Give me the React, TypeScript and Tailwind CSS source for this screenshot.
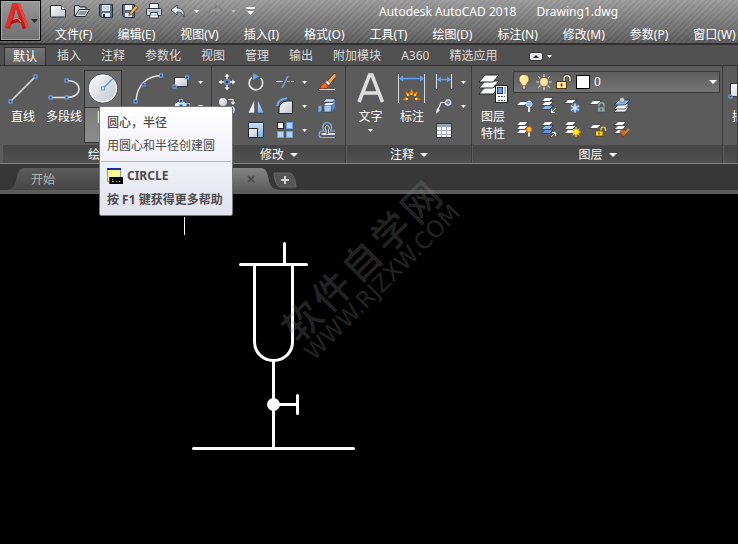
import type { ReactNode } from "react";

const menus = [
  "文件(F)",
  "编辑(E)",
  "视图(V)",
  "插入(I)",
  "格式(O)",
  "工具(T)",
  "绘图(D)",
  "标注(N)",
  "修改(M)",
  "参数(P)",
  "窗口(W)",
];

const ribbonTabs = [
  "插入",
  "注释",
  "参数化",
  "视图",
  "管理",
  "输出",
  "附加模块",
  "A360",
  "精选应用",
];

function Caret({ className = "" }: { className?: string }) {
  return (
    <svg width="5" height="3" viewBox="0 0 5 3" className={`shrink-0 ${className}`}>
      <path d="M0 0h5L2.5 3z" fill="currentColor" />
    </svg>
  );
}

function Grip({ x, y }: { x: number; y: number }) {
  return (
    <rect x={x - 1.5} y={y - 1.5} width="3" height="3" fill="#34445f" stroke="#7ab0ff" strokeWidth="1" />
  );
}

function Defs() {
  return (
    <svg width="0" height="0" className="absolute" aria-hidden="true">
      <defs>
        <linearGradient id="steel" x1="0" y1="0" x2="1" y2="1">
          <stop offset="0" stopColor="#fdfdff" />
          <stop offset="1" stopColor="#bfc3cd" />
        </linearGradient>
        <linearGradient id="blue" x1="0" y1="0" x2="0" y2="1">
          <stop offset="0" stopColor="#cfe2fb" />
          <stop offset="1" stopColor="#7ba9e6" />
        </linearGradient>
        <linearGradient id="red" x1="0" y1="0" x2="1" y2="1">
          <stop offset="0" stopColor="#e63a37" />
          <stop offset="1" stopColor="#a91417" />
        </linearGradient>
        <linearGradient id="tabDim" x1="0" y1="0" x2="0" y2="1">
          <stop offset="0" stopColor="#5b5b5b" />
          <stop offset="1" stopColor="#464646" />
        </linearGradient>
        <linearGradient id="tabLit" x1="0" y1="0" x2="0" y2="1">
          <stop offset="0" stopColor="#858585" />
          <stop offset="1" stopColor="#5e5e5e" />
        </linearGradient>
      </defs>
    </svg>
  );
}

/* quick access toolbar */

function QuickButton({ label, children }: { label: string; children: ReactNode }) {
  return (
    <button type="button" aria-label={label} className="flex h-4 w-4 items-center justify-center">
      <svg width="16" height="16" viewBox="0 0 16 16">
        {children}
      </svg>
    </button>
  );
}

function QuickAccess() {
  return (
    <div className="flex items-center gap-2 pl-[9px]">
      <QuickButton label="新建">
        <path d="M.5 2.5h11l4 4v7.5H.5z" fill="url(#steel)" stroke="#2d2f33" />
        <path d="M11.5 2.5v4h4" fill="#fff" stroke="#555b66" />
      </QuickButton>
      <QuickButton label="打开">
        <path d="M.5 13V2.5h4.500l1 1.500h6v3" fill="#d9dfe5" stroke="#25282c" />
        <path d="M1 13.500L5 6.500h10.500L11.500 13.500z" fill="#e3e8ee" stroke="#25282c" />
        <path d="M3.500 12l2.500-4h7.500l-2.500 4z" fill="#8c949d" />
      </QuickButton>
      <QuickButton label="保存">
        <path d="M1.500 1.500h13v13h-11l-2-2z" fill="#5a6f8c" stroke="#242d3a" />
        <rect x="4" y="2" width="8" height="6" fill="#f2f4f7" />
        <path d="M5 4h6M5 6h6" stroke="#a5adb8" />
        <rect x="4" y="10" width="8" height="4" fill="#e3e6ea" />
        <rect x="5" y="11" width="2" height="3" fill="#2b3542" />
      </QuickButton>
      <QuickButton label="另存为">
        <path d="M.5 1.500h12v13h-10l-2-2z" fill="#5a6f8c" stroke="#242d3a" />
        <rect x="3" y="2" width="7" height="5" fill="#f2f4f7" />
        <rect x="3" y="10" width="7" height="4" fill="#e3e6ea" />
        <path d="M7 12.500l1-3.500 5.500-6.500 2.500 2-6 6.500z" fill="#f4b73d" stroke="#33280f" strokeWidth=".7" />
        <path d="M13.500 2.500l1-1 1.500 1.500v1.500z" fill="#e8743b" />
      </QuickButton>
      <QuickButton label="打印">
        <path d="M3.500 6V.5h9V6" fill="#f6f7f9" stroke="#3b4048" />
        <rect x=".5" y="5.500" width="15" height="7" rx="1" fill="#d5dae0" stroke="#2b2f36" />
        <path d="M2 8h12" stroke="#89919c" />
        <path d="M4.500 9.500h7l1 5.500h-9z" fill="#fff" stroke="#3b4048" />
        <path d="M5 12h6" stroke="#7aa3d8" />
      </QuickButton>
      <QuickButton label="放弃">
        <path d="M7 2L1 7l6 5V9c3.500 0 5.500 1 7 5 .8-5-1.500-9-7-9z" fill="url(#steel)" stroke="#3c4450" strokeWidth=".9" />
      </QuickButton>
      <Caret className="text-white" />
      <QuickButton label="重做">
        <path d="M9 2l6 5-6 5V9c-3.500 0-5.500 1-7 5-.8-5 1.500-9 7-9z" fill="#979797" stroke="#747474" strokeWidth=".9" />
      </QuickButton>
      <Caret className="text-[#bdbdbd]" />
      <button type="button" aria-label="自定义快速访问工具栏" className="-ml-0.5 flex h-4 w-4 items-center justify-center">
        <svg width="9" height="8" viewBox="0 0 9 8">
          <path d="M1 4h7L4.500 8z" fill="#fff" />
          <rect width="9" height="2" fill="#fff" />
        </svg>
      </button>
    </div>
  );
}

function Header() {
  return (
    <header className="flex h-[45px] overflow-hidden border-b-2 border-[#303030] bg-[repeating-linear-gradient(135deg,#ffffff0a_0_2px,#0000000a_2px_4px),linear-gradient(#9c9c9c,#5c5c5c)]">
      <button
        type="button"
        aria-label="应用程序菜单"
        className="flex h-[41px] w-[41px] shrink-0 items-start gap-0.5 border border-black bg-linear-to-b from-[#989898] to-[#6f6f6f] pl-1 pt-0.5 shadow-[inset_0_0_0_1px_#a8a8a8]"
      >
        <svg width="24" height="27" viewBox="0 0 24 27">
          <path
            d="M0 25L7.500 0h7.500l8.500 24-5.500 2.500-2.500-6.500c-3-1-6-.5-9 1L5 26zM11 6l-2.500 9h5.500z"
            fill="url(#red)"
            fillRule="evenodd"
          />
          <path d="M0 25L7.500 0H10L5.500 22z" fill="#dc2f2e" />
          <path d="M12 0h3l8.500 24-2.500 1z" fill="#ea443f" />
          <path d="M5.500 20c3-4 6-5 9-5l2 4c-4-1-8 0-11 3z" fill="#9d1216" />
          <path d="M8 16.500c3-2 6-1.500 8 2.500" fill="none" stroke="#f28178" strokeWidth="1.200" />
        </svg>
        <svg width="7" height="5" viewBox="0 0 7 5" className="mt-4">
          <path d="M0 0h7L3.500 4z" fill="#25303c" />
        </svg>
      </button>
      <div className="min-w-0 flex-1">
        <div className="flex h-[22px] items-center">
          <QuickAccess />
          <h1 className="flex gap-5 whitespace-nowrap pl-[121px] pt-0.5 text-[12px] text-white">
            <span>Autodesk AutoCAD 2018</span>
            <span>Drawing1.dwg</span>
          </h1>
        </div>
        <nav className="flex h-6 items-center gap-[25px] whitespace-nowrap pl-[14px] pt-0.5 text-[12px] text-white">
          {menus.map((m) => (
            <button key={m} type="button">
              {m}
            </button>
          ))}
        </nav>
      </div>
    </header>
  );
}

function RibbonTabs() {
  return (
    <nav className="flex h-[21px] items-end gap-5 whitespace-nowrap border-b border-[#2f2f2f] bg-[#515151] pl-1 text-[12px] text-[#dcdcdc]">
      <button
        type="button"
        className="-mr-[9px] h-[18px] border border-b-0 border-[#2f2f2f] bg-linear-to-b from-[#757575] to-[#5d5d5d] px-2 leading-[18px] text-white"
      >
        默认
      </button>
      {ribbonTabs.map((t) => (
        <button key={t} type="button" className="h-[18px] leading-[18px]">
          {t}
        </button>
      ))}
      <button type="button" aria-label="最小化功能区" className="ml-3 flex h-[18px] items-center gap-1">
        <svg width="14" height="9" viewBox="0 0 14 9">
          <rect x=".5" y=".5" width="13" height="8" rx="2" fill="#e9e9ee" stroke="#2e2e33" />
          <path d="M4 6h6L7 3z" fill="#222" />
        </svg>
        <Caret className="text-white" />
      </button>
    </nav>
  );
}

/* ribbon building blocks */

function Panel({
  title,
  className,
  children,
}: {
  title: string;
  className: string;
  children: ReactNode;
}) {
  return (
    <section className={`flex min-w-0 flex-col overflow-hidden border-r border-[#3b3b3b] ${className}`}>
      <div className="flex h-[79px] pt-1">{children}</div>
      <footer className="ml-px flex h-[18px] items-center justify-center gap-1.5 whitespace-nowrap bg-linear-to-b from-[#464646] to-[#505050] pt-px text-[12px] text-white">
        {title && (
          <>
            <span>{title}</span>
            <svg width="8" height="4" viewBox="0 0 8 4">
              <path d="M0 0h8L4 4z" fill="#fff" />
            </svg>
          </>
        )}
      </footer>
    </section>
  );
}

function BigButton({
  label,
  className = "",
  children,
}: {
  label: ReactNode;
  className?: string;
  children: ReactNode;
}) {
  return (
    <button
      type="button"
      className={`flex h-[73px] shrink-0 flex-col items-center whitespace-nowrap text-[12px] leading-[17px] text-white ${className}`}
    >
      <svg width="36" height="36" viewBox="0 0 36 36" className="mb-0.5 shrink-0">
        {children}
      </svg>
      {label}
    </button>
  );
}

function SmallButton({
  label,
  caret = false,
  children,
}: {
  label: string;
  caret?: boolean;
  children: ReactNode;
}) {
  return (
    <button type="button" aria-label={label} className="flex h-6 items-center justify-center gap-2 text-white">
      <svg width="18" height="18" viewBox="0 0 18 18" className="shrink-0">
        {children}
      </svg>
      {caret && <Caret />}
    </button>
  );
}

function DrawPanel() {
  return (
    <Panel title="绘图" className="w-[212px] pl-0.5">
      <BigButton label="直线" className="w-[42px]">
        <path d="M6 31L31 6" stroke="#e6e6e6" strokeWidth="1.500" />
        <Grip x={5.5} y={31.5} />
        <Grip x={30.5} y={6.5} />
      </BigButton>
      <BigButton label="多段线" className="w-[40px]">
        <path d="M5 27.500h16c8 0 12-4 12-8.500S29 10.500 21 10.500" fill="none" stroke="#e6e6e6" strokeWidth="1.500" />
        <Grip x={4.5} y={27.5} />
        <Grip x={20.5} y={27.5} />
        <Grip x={20.5} y={10.5} />
      </BigButton>
      <BigButton
        label="圆"
        className="w-[38px] border border-[#333] bg-[linear-gradient(#6b6b6b_0_36px,#333_36px_37px,#7c7c7c_37px,#8c8c8c)]"
      >
        <circle cx="18" cy="17.500" r="14.500" fill="url(#steel)" stroke="#383d47" strokeWidth="1" />
        <circle cx="18" cy="17.500" r="13.500" fill="none" stroke="#fff" strokeWidth="1.200" />
        <path d="M18 17.500L28 7.500" stroke="#5c93dc" strokeWidth="1.500" />
        <rect x="16.500" y="16" width="3" height="3" fill="#fff" stroke="#5c93dc" />
      </BigButton>
      <BigButton label="圆弧" className="w-[46px]">
        <path d="M9 31C10 15 20 5.500 35 5.500" fill="none" stroke="#e6e6e6" strokeWidth="1.500" />
        <Grip x={8.5} y={31.5} />
        <Grip x={16.5} y={14.5} />
        <Grip x={34} y={5.5} />
      </BigButton>
      <div className="ml-1 flex flex-col">
        <SmallButton label="矩形" caret>
          <rect x="2.500" y="4.500" width="13" height="9" fill="url(#steel)" stroke="#34373d" />
          <Grip x={2.5} y={13.5} />
          <Grip x={15} y={4.5} />
        </SmallButton>
        <SmallButton label="椭圆" caret>
          <ellipse cx="9" cy="9" rx="7" ry="5" fill="url(#steel)" stroke="#34373d" />
          <Grip x={9} y={4} />
          <Grip x={16} y={8} />
          <Grip x={9} y={9} />
        </SmallButton>
        <SmallButton label="图案填充" caret>
          <rect x="2" y="3" width="13" height="12" fill="#9db8dd" stroke="#34373d" />
          <path d="M2 9l6-6M2 15L14 3M8 15l7-7" stroke="#fff" />
        </SmallButton>
      </div>
    </Panel>
  );
}

function ModifyPanel() {
  return (
    <Panel title="修改" className="w-[134px]">
      <div className="grid grid-cols-[29px_29px_43px_28px] content-start">
        <SmallButton label="移动">
          <path d="M9 0l3 4H6zM9 18l3-4H6zM0 9l4-3v6zM18 9l-4-3v6z" fill="#f2f2f5" stroke="#33363b" strokeWidth=".5" />
          <path d="M9 3v3M9 12v3M3 9h3M12 9h3" stroke="#f2f2f5" strokeWidth="1.500" />
          <rect x="7" y="7" width="4" height="4" fill="#2c3b54" stroke="#7ab0ff" />
        </SmallButton>
        <SmallButton label="旋转">
          <path d="M5 4.500A6.800 6.800 0 1 0 13.500 5" fill="none" stroke="#e3e3e3" strokeWidth="1.600" />
          <path d="M6 0l6 3.500-6 3.500z" fill="#68a3f2" />
        </SmallButton>
        <SmallButton label="修剪" caret>
          <path d="M0 8.500h7" stroke="#e6e6e6" />
          <path d="M11 8.500h7" stroke="#78aef7" strokeDasharray="3 1" />
          <path d="M12 3L6 15" stroke="#78aef7" strokeWidth="1.300" />
        </SmallButton>
        <SmallButton label="删除">
          <path d="M18 0v3.500L12 11 9 8.500 15.500 1z" fill="#f0a95f" stroke="#4a2b10" strokeWidth=".7" />
          <path d="M9 7.500l3.500 3-2 2-3.500-3z" fill="#f3f3f3" stroke="#333" strokeWidth=".5" />
          <path d="M6.500 9.500l4 3.500c-2 3-4 3-8.500 2.500 1-3 2-5 4.500-6z" fill="#f0642c" stroke="#7c1d08" strokeWidth=".6" />
          <path d="M1 16.500h16" stroke="#dedede" />
        </SmallButton>
        <SmallButton label="复制">
          <circle cx="5" cy="5" r="4" fill="url(#steel)" />
          <circle cx="13" cy="13" r="4" fill="url(#blue)" />
          <path d="M10 2.500h5V7M13 5l2 2 2-2" fill="none" stroke="#eee" strokeWidth="1.200" />
        </SmallButton>
        <SmallButton label="镜像">
          <path d="M7.500 2V16H1z" fill="#eceef2" stroke="#3b3f46" strokeWidth=".5" />
          <path d="M10.500 2V16H17z" fill="url(#blue)" stroke="#3b3f46" strokeWidth=".5" />
        </SmallButton>
        <SmallButton label="圆角" caret>
          <path d="M3 16.500V12c0-5 4-8 9-8h4.500v12.500z" fill="url(#steel)" stroke="#24272c" />
          <path d="M1 9C2 4 5 1.500 11 1.500" fill="none" stroke="#6ea5f3" strokeWidth="2" />
        </SmallButton>
        <SmallButton label="分解">
          <path d="M5 5l3-3h9l-2 3z" fill="#dbe8f9" stroke="#35486a" strokeWidth=".6" />
          <path d="M15 5l2-3v4l-2 3z" fill="#5b8bcf" />
          <path d="M6 8h8l-1 7H6z" fill="#a9c6ec" stroke="#35486a" strokeWidth=".7" />
          <path d="M6 8l2-2h8l-2 2z" fill="#eaf2fd" />
          <path d="M14 8l3-2v5l-3 3z" fill="#5b8bcf" />
          <path d="M0 9l4-1v6l-4 2z" fill="#7fabe6" stroke="#35486a" strokeWidth=".6" />
        </SmallButton>
        <SmallButton label="拉伸">
          <path d="M3 15V5h5l7 10z" fill="url(#blue)" stroke="#1d2b45" />
        </SmallButton>
        <SmallButton label="缩放">
          <rect x="1.500" y="1.500" width="15" height="15" fill="url(#blue)" stroke="#24344f" />
          <rect x="1.500" y="7.500" width="9" height="9" fill="url(#steel)" stroke="#222" />
        </SmallButton>
        <SmallButton label="阵列" caret>
          <rect x="1.500" y="1.500" width="6" height="6" fill="#f5f5f7" stroke="#222" />
          <rect x="10.500" y="1.500" width="6" height="6" fill="#b5d2f8" stroke="#6a9fe8" />
          <rect x="1.500" y="10.500" width="6" height="6" fill="#b5d2f8" stroke="#6a9fe8" />
          <rect x="10.500" y="10.500" width="6" height="6" fill="#b5d2f8" stroke="#6a9fe8" />
        </SmallButton>
        <SmallButton label="偏移">
          <path d="M17 16.500H3.500C.5 16.500 0 10.500 4 10h2C3.500 6 5 1.500 9 1.500s6 4.500 3.500 8.500H17" fill="none" stroke="#86b5f6" strokeWidth="1.200" />
          <path d="M17 13.500H4.500c-1.500 0-1.500-1 0-1H8V9C6.500 7 7 4.500 9 4.500s3 2.500 1.500 4.500v3.500H17" fill="none" stroke="#dfe5ee" />
        </SmallButton>
      </div>
    </Panel>
  );
}

function AnnotationPanel() {
  return (
    <Panel title="注释" className="w-[126px]">
      <BigButton
        className="ml-1 w-[41px]"
        label={
          <>
            <span>文字</span>
            <Caret className="mt-1" />
          </>
        }
      >
        <path d="M6 32L16.500 5h2.500l10.500 27M10 23h16" fill="none" stroke="#dedede" strokeWidth="3.600" />
      </BigButton>
      <BigButton label="标注" className="w-[42px]">
        <path d="M4.500 4v29M30.500 4v29" stroke="#d9d9d9" />
        <path d="M6 8.500h23" stroke="#5ea0fb" strokeWidth="1.500" />
        <path d="M5 8.500l4-3v6zM30 8.500l-4-3v6z" fill="#5ea0fb" />
        <g fill="#f08a12" stroke="#93400c" strokeWidth=".4">
          <path d="M17.500 18.500l2 4.500-2 3-2-3z" />
          <path d="M11 21l4 2 .5 3.500-3-1z" />
          <path d="M24 21l-4 2-.5 3.500 3-1z" />
          <path d="M8 29.500l4-2.500 3 2-3 1.500z" />
          <path d="M27 29.500l-4-2.500-3 2 3 1.500z" />
        </g>
        <g fill="#ffee58">
          <circle cx="17.500" cy="24" r="1.100" />
          <circle cx="13.800" cy="25" r="1" />
          <circle cx="21.200" cy="25" r="1" />
          <circle cx="13" cy="29" r="1" />
          <circle cx="22" cy="29" r="1" />
        </g>
      </BigButton>
      <div className="ml-0.5 flex flex-col items-start">
        <SmallButton label="线性" caret>
          <path d="M1.500 1v15M16.500 1v15" stroke="#e0e0e0" />
          <path d="M4 6.500h10" stroke="#5ea0fb" strokeWidth="1.500" />
          <path d="M2 6.500l4-3v6zM16 6.500l-4-3v6z" fill="#5ea0fb" />
        </SmallButton>
        <SmallButton label="引线" caret>
          <path d="M2 15L6 5.500h6" fill="none" stroke="#e8e8e8" strokeWidth="1.200" />
          <path d="M1 17l1-6 3 2z" fill="#eee" />
          <circle cx="13" cy="5.500" r="2.700" fill="#7f8aa0" stroke="#eef1f6" strokeWidth="1.200" />
        </SmallButton>
        <SmallButton label="表格">
          <rect x="1.500" y="2.500" width="15" height="14" fill="#f4f4f6" stroke="#34373d" />
          <path d="M2 4.500h14" stroke="#9aa0ab" strokeWidth="3" />
          <path d="M2 9.500h14M2 13.500h14M6.500 6v10M11.500 6v10" stroke="#a6a9b0" />
        </SmallButton>
      </div>
    </Panel>
  );
}

function Sheet({ x, y, fill = "#fafafa" }: { x: number; y: number; fill?: string }) {
  return (
    <path
      d="M0 4.500L4 .5h8.500l-4 4z"
      transform={`translate(${x} ${y})`}
      fill={fill}
      stroke="#33363b"
      strokeWidth=".8"
    />
  );
}

function LayersPanel() {
  return (
    <Panel title="图层" className="w-[251px]">
      <BigButton
        className="ml-0.5 w-[38px]"
        label={
          <>
            <span>图层</span>
            <span>特性</span>
          </>
        }
      >
        <g fill="#fff" stroke="#24272c" strokeWidth="1">
          <path d="M4 24l6-7h14l-6 7z" />
          <path d="M4 18l6-7h14l-6 7z" />
          <path d="M4 12l6-7h14l-6 7z" />
        </g>
        <rect x="20.500" y="15.500" width="12" height="17" fill="#f5f6f8" stroke="#24272c" />
        <rect x="22.500" y="17.500" width="5" height="6" fill="#6f9ada" stroke="#1f3b6d" />
        <path d="M30 17v7" stroke="#a6a6a6" strokeWidth="1.500" />
        <path d="M23 26.500h7M23 30.500h7" stroke="#444" strokeDasharray="2 1" />
      </BigButton>
      <div className="flex min-w-0 flex-1 flex-col pl-px">
        <div className="mr-0.5 mt-px flex h-[22px] items-center gap-1 border border-[#383838] bg-linear-to-b from-[#5e5e5e] to-[#747474] pl-0.5">
          <svg width="16" height="18" viewBox="0 0 16 18">
            <path d="M8 1.500c3 0 5 2 5 4.500 0 3-2.500 4-3 7H6c-.5-3-3-4-3-7 0-2.500 2-4.500 5-4.500z" fill="#ffe69a" stroke="#5b4b25" strokeWidth=".7" />
            <path d="M5 5c0-1 1-2 2.500-2" stroke="#fff" fill="none" />
            <path d="M6.500 13h3v3h-3z" fill="#d9dce2" stroke="#333" strokeWidth=".6" />
          </svg>
          <svg width="16" height="16" viewBox="0 0 16 16">
            <g stroke="#dcdcdc" strokeWidth="1.100">
              <path d="M8 0v3M8 13v3M0 8h3M13 8h3M2.300 2.300l2 2M11.700 11.700l2 2M13.700 2.300l-2 2M4.300 11.700l-2 2" />
            </g>
            <circle cx="8" cy="8" r="4" fill="#ffe7a0" stroke="#c8b06a" strokeWidth=".6" />
          </svg>
          <svg width="16" height="16" viewBox="0 0 16 16">
            <path d="M8 8V4c0-3 6-3 6 0v3" fill="none" stroke="#2c2c2c" strokeWidth="3" />
            <path d="M8 8V4c0-3 6-3 6 0v3" fill="none" stroke="#ece3c2" strokeWidth="1.500" />
            <rect x=".5" y="7.500" width="10" height="7" fill="#ffe69a" stroke="#4b3d18" />
            <path d="M5.500 9.500v3" stroke="#3b2e10" strokeWidth="1.500" />
          </svg>
          <span className="h-[14px] w-[14px] shrink-0 border border-black bg-white" />
          <div className="flex min-w-0 flex-1 items-center pr-0.5">
            <select aria-label="图层" className="min-w-0 flex-1 appearance-none bg-transparent text-[12px] leading-4 text-white">
              <option>0</option>
            </select>
            <svg width="8" height="4" viewBox="0 0 8 4" className="pointer-events-none">
              <path d="M0 0h8L4 4z" fill="#fff" />
            </svg>
          </div>
        </div>
        <div className="grid w-[121px] grid-cols-5">
          <SmallButton label="关">
            <Sheet x={0} y={5} />
            <circle cx="13" cy="8" r="3" fill="#8fbdf5" stroke="#e9f2ff" strokeWidth=".8" />
            <path d="M13 11v5" stroke="#e7e7e7" strokeWidth="2" />
          </SmallButton>
          <SmallButton label="隔离">
            <Sheet x={1} y={9} fill="#8ab4ee" />
            <Sheet x={1} y={5} />
            <Sheet x={1} y={1} />
            <path d="M16 12l-4 4M11.500 13v3.500H15" fill="none" stroke="#eee" />
          </SmallButton>
          <SmallButton label="冻结">
            <Sheet x={0} y={3} />
            <circle cx="11" cy="12" r="4.500" fill="#4a7ac0" />
            <path d="M11 7.500v9M7 9.700l8 4.600M15 9.700l-8 4.600" stroke="#e7f1ff" strokeWidth="1.300" />
          </SmallButton>
          <SmallButton label="锁定">
            <Sheet x={0} y={4} />
            <path d="M10 11V9c0-3 5-3 5 0v2" fill="none" stroke="#8fa8a6" strokeWidth="1.400" />
            <rect x="8.500" y="11" width="7.500" height="5" fill="#8fa8a6" stroke="#475756" strokeWidth=".7" />
            <path d="M12 12.500v2" stroke="#2d3837" />
          </SmallButton>
          <SmallButton label="置为当前">
            <path d="M1 16l5-5h10l-4 5z" fill="#fafafa" stroke="#33363b" strokeWidth=".8" />
            <path d="M1 13l5-5h10l-4 5z" fill="#fafafa" stroke="#33363b" strokeWidth=".8" />
            <path d="M1 9l5-5h11l-5 5z" fill="#8ab4ee" stroke="#1f3357" strokeWidth=".8" />
            <circle cx="9" cy="4" r="2.500" fill="#c9ced6" stroke="#555" strokeWidth=".5" />
          </SmallButton>
          <SmallButton label="打开所有图层">
            <Sheet x={0} y={9} />
            <Sheet x={0} y={5} />
            <Sheet x={0} y={1} />
            <circle cx="13" cy="9.500" r="2.800" fill="#ffbf32" stroke="#e0650c" strokeWidth="1" />
            <path d="M13 12.500v4" stroke="#e7e7e7" strokeWidth="2" />
          </SmallButton>
          <SmallButton label="取消隔离">
            <Sheet x={1} y={9} fill="#5f93e0" />
            <Sheet x={1} y={5} fill="#8ab4ee" />
            <Sheet x={1} y={1} />
            <path d="M11 17l4-4M12 12.500h3.500V16" fill="none" stroke="#eee" />
          </SmallButton>
          <SmallButton label="解冻">
            <Sheet x={0} y={9} />
            <Sheet x={0} y={5} />
            <Sheet x={0} y={1} />
            <path d="M12 7v10M7 12h10M8.500 8.500l7 7M15.500 8.500l-7 7" stroke="#ffdd42" />
            <circle cx="12" cy="12" r="3" fill="#ffe22e" stroke="#f3b90e" strokeWidth=".7" />
          </SmallButton>
          <SmallButton label="解锁">
            <Sheet x={0} y={4} />
            <path d="M12 11V9c0-2.500 4.500-2.500 4.500 0v2" fill="none" stroke="#f1c324" strokeWidth="1.400" />
            <rect x="6.500" y="11" width="7.500" height="5" fill="#ffd028" stroke="#5b430b" strokeWidth=".7" />
            <path d="M10 12.500v2" stroke="#33270a" />
          </SmallButton>
          <SmallButton label="匹配图层">
            <Sheet x={1} y={9} />
            <Sheet x={1} y={5} />
            <Sheet x={1} y={1} />
            <path d="M7 11l4-1 3 3-3 3.500c-2 0-3-2-4-5.500z" fill="#c96b22" stroke="#6b3108" strokeWidth=".6" />
            <path d="M12 13l4-4" stroke="#d98844" strokeWidth="2" />
          </SmallButton>
        </div>
      </div>
    </Panel>
  );
}

function Ribbon() {
  return (
    <div className="flex h-[98px] overflow-hidden border-b border-[#858585] bg-[#5b5b5b]">
      <DrawPanel />
      <ModifyPanel />
      <AnnotationPanel />
      <LayersPanel />
      <Panel title="" className="flex-1">
        <BigButton label="插入" className="w-[42px]">
          <rect x="4.500" y="13.500" width="24" height="13" fill="url(#steel)" stroke="#34373d" />
          <Grip x={4.5} y={26.5} />
        </BigButton>
      </Panel>
    </div>
  );
}

function FileTabs() {
  return (
    <div className="flex h-[30px] items-end overflow-hidden border-b-4 border-[#5c5c5c] bg-[#373737] pl-1 text-[12px]">
      <svg width="20" height="22" viewBox="0 0 20 22" className="shrink-0">
        <path d="M0 22c13 0 11-9 14-17 1-3 3-5 6-5v22z" fill="url(#tabDim)" />
      </svg>
      <button
        type="button"
        className="h-[22px] w-[92px] bg-linear-to-b from-[#5b5b5b] to-[#464646] pl-[7px] pt-px text-left text-[#b5b5b5]"
      >
        开始
      </button>
      <div className="flex h-[22px] w-[145px] items-center justify-between bg-linear-to-b from-[#858585] to-[#5e5e5e] pl-6 pr-1.5">
        <button type="button" className="text-white">
          Drawing1
        </button>
        <button type="button" aria-label="关闭">
          <svg width="8" height="8" viewBox="0 0 8 8">
            <path d="M1 1l6 6M7 1L1 7" stroke="#444" strokeWidth="1.700" />
          </svg>
        </button>
      </div>
      <svg width="20" height="22" viewBox="0 0 20 22" className="shrink-0">
        <path d="M20 22C7 22 9 13 6 5 5 2 3 0 0 0v22z" fill="url(#tabLit)" />
      </svg>
      <button type="button" aria-label="新图形" className="-ml-2 mb-0.5">
        <svg width="24" height="16" viewBox="0 0 24 16">
          <path d="M1 1h15c4 0 6 5 7 14H8C4 15 2 11 1 1z" fill="#555" stroke="#666" />
          <path d="M12 4v8M8 8h8" stroke="#d2d2d2" strokeWidth="2" />
        </svg>
      </button>
    </div>
  );
}

function Tooltip() {
  return (
    <div
      role="tooltip"
      className="absolute left-[99px] top-[106px] w-[134px] rounded-[2px] border border-[#767676] bg-linear-to-b from-white to-[#e2e2ef] text-[12px] text-[#4c4c4c]"
    >
      <p className="px-[7px] pt-2 font-medium leading-4">圆心，半径</p>
      <p className="px-[7px] py-[7px] leading-4">用圆心和半径创建圆</p>
      <div className="mx-px border-t border-[#b5b5b5]" />
      <div className="flex items-center gap-1 px-[7px] pt-1.5 font-bold leading-4">
        <svg width="16" height="16" viewBox="0 0 16 16">
          <rect x=".5" y=".5" width="13" height="13" fill="#f6f69a" stroke="#999" />
          <path d="M0 1h14" stroke="#1e2c9c" strokeWidth="2" />
          <rect x="2" y="9" width="14" height="7" fill="#000" />
          <path d="M2.500 9v7" stroke="#2437b6" />
          <path d="M5 11.500h1M5 13.500h2M9 13.500h1M12 13.500h1" stroke="#bbb" />
        </svg>
        CIRCLE
      </div>
      <p className="whitespace-nowrap px-[7px] pb-[7px] pt-2 font-bold leading-4">按 F1 键获得更多帮助</p>
    </div>
  );
}

function Drawing() {
  return (
    <svg width="370" height="270" viewBox="0 194 370 270" className="block" aria-label="图形">
      <path d="M184.500 217v18" stroke="#fff" />
      <g fill="none" stroke="#fff" strokeWidth="3" strokeLinecap="round">
        <path d="M284.500 243.500v20" />
        <path d="M240.500 264.500h66" />
        <path d="M254.500 265v77c0 10 8 18.500 19 18.500s19-8.500 19-18.500v-77" />
        <path d="M273.500 361v87" />
        <path d="M274 404.500h23M297.500 395.500v18" />
        <path d="M193.500 448.500h160" />
      </g>
      <circle cx="273.500" cy="404.500" r="6.500" fill="#fff" />
    </svg>
  );
}

function Watermark() {
  return (
    <div className="pointer-events-none absolute left-[250px] top-[238px] w-[236px] -rotate-45 whitespace-nowrap text-[#8a8a8a] opacity-25">
      <div className="flex justify-center gap-1 text-[38px] font-medium leading-10">
        {["软", "件", "自", "学", "网"].map((c) => (
          <span key={c}>{c}</span>
        ))}
      </div>
      <div className="text-center font-['DejaVu_Sans',sans-serif] text-[23px] leading-5">WWW.RJZXW.COM</div>
    </div>
  );
}

export default function App() {
  return (
    <div className="relative min-h-screen overflow-hidden bg-black font-['Noto_Sans','Noto_Sans_CJK_SC',sans-serif]">
      <Defs />
      <Header />
      <RibbonTabs />
      <Ribbon />
      <FileTabs />
      <main>
        <Drawing />
      </main>
      <Watermark />
      <Tooltip />
    </div>
  );
}
